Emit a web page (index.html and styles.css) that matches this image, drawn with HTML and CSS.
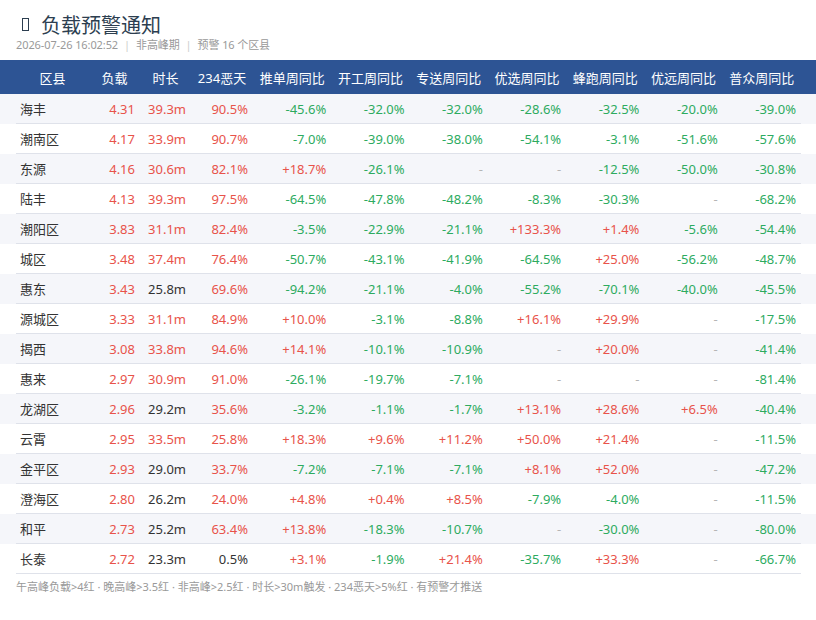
FILE: index.html
```html
<!DOCTYPE html>
<html lang="zh">
<head>
<meta charset="utf-8">
<link rel="stylesheet" href="styles.css">
</head>
<body>
<div class="top">
  <div class="title"><span class="tofu"></span><span>负载预警通知</span></div>
  <div class="sub">2026-07-26 16:02:52<span class="sep">|</span>非高峰期<span class="sep">|</span>预警 16 个区县</div>
</div>
<div class="table">
  <div class="thead">
    <div class="grid">
      <div>区县</div><div>负载</div><div>时长</div><div>234恶天</div><div>推单周同比</div><div>开工周同比</div><div>专送周同比</div><div>优选周同比</div><div>蜂跑周同比</div><div>优远周同比</div><div>普众周同比</div>
    </div>
  </div>
  <div class="row odd"><div class="grid"><div class="name">海丰</div><div class="r">4.31</div><div class="r">39.3m</div><div class="r">90.5%</div><div class="g">-45.6%</div><div class="g">-32.0%</div><div class="g">-32.0%</div><div class="g">-28.6%</div><div class="g">-32.5%</div><div class="g">-20.0%</div><div class="g">-39.0%</div></div></div>
  <div class="row"><div class="grid"><div class="name">潮南区</div><div class="r">4.17</div><div class="r">33.9m</div><div class="r">90.7%</div><div class="g">-7.0%</div><div class="g">-39.0%</div><div class="g">-38.0%</div><div class="g">-54.1%</div><div class="g">-3.1%</div><div class="g">-51.6%</div><div class="g">-57.6%</div></div></div>
  <div class="row odd"><div class="grid"><div class="name">东源</div><div class="r">4.16</div><div class="r">30.6m</div><div class="r">82.1%</div><div class="r">+18.7%</div><div class="g">-26.1%</div><div class="n">-</div><div class="n">-</div><div class="g">-12.5%</div><div class="g">-50.0%</div><div class="g">-30.8%</div></div></div>
  <div class="row"><div class="grid"><div class="name">陆丰</div><div class="r">4.13</div><div class="r">39.3m</div><div class="r">97.5%</div><div class="g">-64.5%</div><div class="g">-47.8%</div><div class="g">-48.2%</div><div class="g">-8.3%</div><div class="g">-30.3%</div><div class="n">-</div><div class="g">-68.2%</div></div></div>
  <div class="row odd"><div class="grid"><div class="name">潮阳区</div><div class="r">3.83</div><div class="r">31.1m</div><div class="r">82.4%</div><div class="g">-3.5%</div><div class="g">-22.9%</div><div class="g">-21.1%</div><div class="r">+133.3%</div><div class="r">+1.4%</div><div class="g">-5.6%</div><div class="g">-54.4%</div></div></div>
  <div class="row"><div class="grid"><div class="name">城区</div><div class="r">3.48</div><div class="r">37.4m</div><div class="r">76.4%</div><div class="g">-50.7%</div><div class="g">-43.1%</div><div class="g">-41.9%</div><div class="g">-64.5%</div><div class="r">+25.0%</div><div class="g">-56.2%</div><div class="g">-48.7%</div></div></div>
  <div class="row odd"><div class="grid"><div class="name">惠东</div><div class="r">3.43</div><div class="d">25.8m</div><div class="r">69.6%</div><div class="g">-94.2%</div><div class="g">-21.1%</div><div class="g">-4.0%</div><div class="g">-55.2%</div><div class="g">-70.1%</div><div class="g">-40.0%</div><div class="g">-45.5%</div></div></div>
  <div class="row"><div class="grid"><div class="name">源城区</div><div class="r">3.33</div><div class="r">31.1m</div><div class="r">84.9%</div><div class="r">+10.0%</div><div class="g">-3.1%</div><div class="g">-8.8%</div><div class="r">+16.1%</div><div class="r">+29.9%</div><div class="n">-</div><div class="g">-17.5%</div></div></div>
  <div class="row odd"><div class="grid"><div class="name">揭西</div><div class="r">3.08</div><div class="r">33.8m</div><div class="r">94.6%</div><div class="r">+14.1%</div><div class="g">-10.1%</div><div class="g">-10.9%</div><div class="n">-</div><div class="r">+20.0%</div><div class="n">-</div><div class="g">-41.4%</div></div></div>
  <div class="row"><div class="grid"><div class="name">惠来</div><div class="r">2.97</div><div class="r">30.9m</div><div class="r">91.0%</div><div class="g">-26.1%</div><div class="g">-19.7%</div><div class="g">-7.1%</div><div class="n">-</div><div class="n">-</div><div class="n">-</div><div class="g">-81.4%</div></div></div>
  <div class="row odd"><div class="grid"><div class="name">龙湖区</div><div class="r">2.96</div><div class="d">29.2m</div><div class="r">35.6%</div><div class="g">-3.2%</div><div class="g">-1.1%</div><div class="g">-1.7%</div><div class="r">+13.1%</div><div class="r">+28.6%</div><div class="r">+6.5%</div><div class="g">-40.4%</div></div></div>
  <div class="row"><div class="grid"><div class="name">云霄</div><div class="r">2.95</div><div class="r">33.5m</div><div class="r">25.8%</div><div class="r">+18.3%</div><div class="r">+9.6%</div><div class="r">+11.2%</div><div class="r">+50.0%</div><div class="r">+21.4%</div><div class="n">-</div><div class="g">-11.5%</div></div></div>
  <div class="row odd"><div class="grid"><div class="name">金平区</div><div class="r">2.93</div><div class="d">29.0m</div><div class="r">33.7%</div><div class="g">-7.2%</div><div class="g">-7.1%</div><div class="g">-7.1%</div><div class="r">+8.1%</div><div class="r">+52.0%</div><div class="n">-</div><div class="g">-47.2%</div></div></div>
  <div class="row"><div class="grid"><div class="name">澄海区</div><div class="r">2.80</div><div class="d">26.2m</div><div class="r">24.0%</div><div class="r">+4.8%</div><div class="r">+0.4%</div><div class="r">+8.5%</div><div class="g">-7.9%</div><div class="g">-4.0%</div><div class="n">-</div><div class="g">-11.5%</div></div></div>
  <div class="row odd"><div class="grid"><div class="name">和平</div><div class="r">2.73</div><div class="d">25.2m</div><div class="r">63.4%</div><div class="r">+13.8%</div><div class="g">-18.3%</div><div class="g">-10.7%</div><div class="n">-</div><div class="g">-30.0%</div><div class="n">-</div><div class="g">-80.0%</div></div></div>
  <div class="row"><div class="grid"><div class="name">长泰</div><div class="r">2.72</div><div class="d">23.3m</div><div class="d">0.5%</div><div class="r">+3.1%</div><div class="g">-1.9%</div><div class="r">+21.4%</div><div class="g">-35.7%</div><div class="r">+33.3%</div><div class="n">-</div><div class="g">-66.7%</div></div></div>
</div>
<div class="foot">午高峰负载&gt;4红 · 晚高峰&gt;3.5红 · 非高峰&gt;2.5红 · 时长&gt;30m触发 · 234恶天&gt;5%红 · 有预警才推送</div>
</body>
</html>
```
FILE: styles.css
```css
html, body {
  margin: 0;
  padding: 0;
  background: #ffffff;
  font-family: "Noto Sans", "Noto Sans CJK SC", sans-serif;
  color: #333333;
}
.top {
  padding: 10px 16px 8px;
}
.title {
  display: flex;
  align-items: center;
  height: 28px;
  font-size: 20px;
  color: #2c3e50;
  font-family: "Noto Sans CJK SC", "Noto Sans", sans-serif;
}
.tofu {
  display: inline-block;
  width: 5px;
  height: 11px;
  border: 1.5px solid #2c3e50;
  margin: 1px 12px 0 6px;
}
.sub {
  font-size: 11px;
  line-height: 14px;
  color: #999999;
  letter-spacing: -0.1px;
}
.sep {
  color: #cccccc;
  margin: 0 6px;
}
.grid {
  display: grid;
  grid-template-columns: 73px 51px 51px 62px repeat(7, 1fr);
  margin: 0 15px 0 16px;
  align-items: center;
  font-size: 13px;
}
.grid > div {
  padding: 0 5px;
  text-align: right;
  white-space: nowrap;
}
.thead {
  background: #2d5494;
  color: #ffffff;
}
.thead .grid {
  height: 34px;
}
.thead .grid > div {
  text-align: center;
  padding: 0;
}
.row .grid {
  height: 29px;
  border-bottom: 1px solid #dfe2ea;
}
.row.odd {
  background: #f5f6fa;
}
.grid > .name {
  text-align: left;
  padding-left: 4px;
  color: #333333;
}
.r { color: #e8534a; }
.g { color: #2dab5f; }
.d { color: #333333; }
.n { color: #b5b5b5; }
.foot {
  padding: 5px 16px 0;
  font-size: 11px;
  line-height: 16px;
  color: #999999;
}
```
